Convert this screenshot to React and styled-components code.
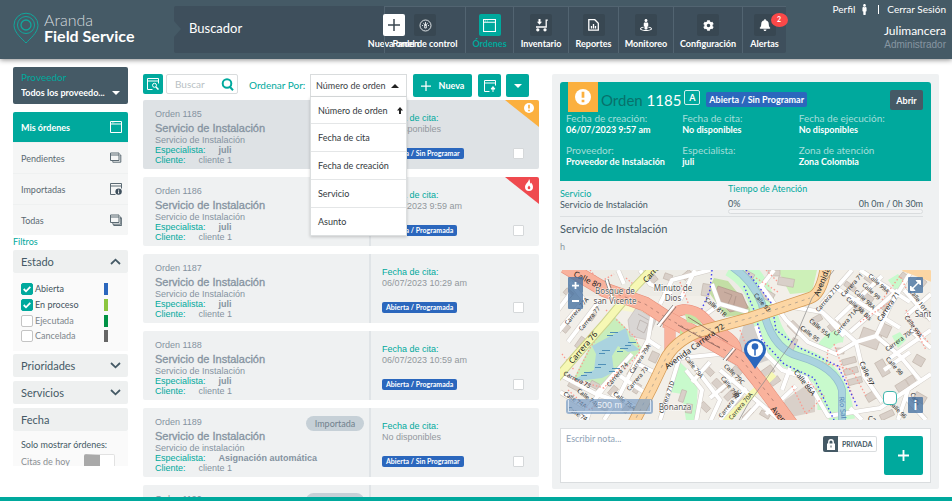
import React from 'react';
import styled, { createGlobalStyle, css } from 'styled-components';
import { FaCog, FaBell, FaMale, FaStreetView } from 'react-icons/fa';

const teal = '#00a99d';
const slate = '#455a66';
const navy = '#3e4f5c';
const blue = '#2b67bd';
const ui = "Lato, 'Open Sans', sans-serif";
const arial = "'Liberation Sans', Arial, sans-serif";

const GlobalStyle = createGlobalStyle`
  *, *::before, *::after { box-sizing: border-box; }
  body { margin: 0; background: #fff; font-family: ${ui}; font-size: 9px; color: ${slate}; overflow: hidden; }
  button, input, select, textarea { font-family: inherit; margin: 0; padding: 0; border: 0; border-radius: 0; }
  button { cursor: pointer; }
  h1, h2, h3, h4, p, ul, dl, dd { margin: 0; padding: 0; list-style: none; font-weight: 400; }
  a { color: inherit; text-decoration: none; }
  svg { display: block; }
`;

const Shell = styled.div`
  display: flex;
  flex-direction: column;
  height: 100vh;
  border-bottom: 4px solid ${teal};
`;

/* ---------- header ---------- */

const Header = styled.header`
  display: flex;
  flex: none;
  height: 59px;
  padding: 6px 6px 6px 13px;
  background: ${slate};
  box-shadow: 0 1px 5px rgba(0, 0, 0, 0.45);
  position: relative;
`;

const Brand = styled.div`
  display: flex;
  width: 161px;
  padding-top: 6px;
  gap: 5px;
  color: #fff;
`;

const BrandName = styled.h1`
  font-size: 16px;
  line-height: 16px;
  font-weight: 300;
  color: #d5dbde;
  strong { display: block; font-weight: 700; color: #fff; }
`;

const Banner = styled.div`
  display: flex;
  flex: 1;
  justify-content: space-between;
  min-width: 0;
  border-radius: 2px;
  background: ${navy};
`;

const Notch = styled.span`
  width: 0;
  margin: 15px 8px 0 0;
  border: 8px solid transparent;
  border-left: 7px solid ${slate};
  border-right: 0;
  height: 16px;
`;

const BannerTitle = styled.h2`
  flex: 1;
  font-size: 13px;
  line-height: 44px;
  color: #fff;
`;

const Nav = styled.nav`
  display: flex;
`;

const NavItem = styled.a`
  display: flex;
  flex-direction: column;
  align-items: center;
  flex: none;
  width: ${(p) => p.$width}px;
  padding-top: 7px;
  gap: 1px;
  font-size: 9px;
  line-height: 13px;
  font-weight: 700;
  white-space: nowrap;
  color: ${(p) => (p.$active ? teal : '#fff')};
  border: solid #526471;
  border-width: 1px 0 0 1px;
  ${(p) => p.$floating && css`
    border-color: transparent;
    margin-right: -35px;
  `}
`;

const NavIcon = styled.span`
  position: relative;
  display: grid;
  place-items: center;
  width: 22px;
  height: 22px;
  border-radius: 2px;
  background: ${(p) => p.$bg || '#384752'};
  color: ${(p) => p.$fg || '#fff'};
`;

const Count = styled.span`
  position: absolute;
  left: 17px;
  top: -1px;
  width: 17px;
  height: 14px;
  border-radius: 50%;
  background: #fb4848;
  color: #fff;
  font-size: 7px;
  line-height: 13px;
  text-align: center;
`;

const Account = styled.div`
  width: 160px;
  text-align: right;
  color: #fff;
`;

const AccountLinks = styled.div`
  display: flex;
  justify-content: flex-end;
  align-items: center;
  gap: 4px;
  margin-top: -4px;
  font-size: 10px;
  line-height: 14px;
`;

const Separator = styled.span`
  width: 1px;
  height: 9px;
  margin: 0 4px;
  background: #fff;
`;

const UserName = styled.p`
  margin-top: 8px;
  font-size: 12px;
  line-height: 14px;
`;

const UserRole = styled.p`
  font: 10px/13px ${arial};
  color: #8796a2;
`;

/* ---------- page columns ---------- */

const Main = styled.main`
  display: grid;
  grid-template-columns: 130px minmax(0, 409fr) minmax(0, 387fr);
  grid-template-rows: minmax(0, 1fr);
  flex: 1;
  min-height: 0;
  padding: 0 13px;
`;

const Sidebar = styled.aside`
  display: flex;
  flex-direction: column;
  margin: 8px 15px 31px 0;
  overflow: hidden;
`;

const ListColumn = styled.section`
  margin-right: 13px;
  padding-top: 15px;
  overflow: hidden;
`;

const Detail = styled.section`
  display: flex;
  flex-direction: column;
  margin: 15px 0 8px;
  padding: 8px;
  background: #eff1f2;
  border-radius: 2px;
`;

/* ---------- sidebar ---------- */

const Provider = styled.label`
  flex: none;
  position: relative;
  height: 37px;
  padding: 4px 8px;
  border-radius: 2px;
  background: ${slate};
  color: ${teal};
  font-size: 10px;
  line-height: 13px;
`;

const ProviderSelect = styled.select`
  appearance: none;
  display: block;
  width: 100%;
  height: 16px;
  background: transparent;
  color: #fff;
  font-size: 9px;
  font-weight: 700;
`;

const Caret = styled.span`
  width: 0;
  height: 0;
  border: 4px solid transparent;
  ${(p) => (p.$up
    ? css`border-bottom-color: ${p.$color}; border-top: 0;`
    : css`border-top-color: ${p.$color}; border-bottom: 0;`)}
`;

const CaretOver = styled(Caret)`
  position: absolute;
  right: ${(p) => p.$right}px;
  bottom: 9px;
  pointer-events: none;
`;

const Menu = styled.nav`
  display: grid;
  gap: 1px;
  flex: none;
  margin-top: 8px;
  border-radius: 2px;
  background: #eff1f1;
  overflow: hidden;
`;

const MenuItem = styled.a`
  display: flex;
  align-items: center;
  justify-content: space-between;
  height: 30px;
  padding: 0 6px 0 8px;
  background: ${(p) => (p.$active ? teal : '#f5f6f6')};
  color: ${(p) => (p.$active ? '#fff' : '#5b6a73')};
  font-weight: ${(p) => (p.$active ? 700 : 400)};
`;

const FilterTitle = styled.h3`
  flex: none;
  font-size: 9px;
  line-height: 13px;
  margin-bottom: 2px;
  color: ${teal};
`;

const FilterHead = styled.button`
  display: flex;
  flex: none;
  align-items: center;
  justify-content: space-between;
  width: 100%;
  height: 23px;
  margin-bottom: ${(p) => (p.$open ? 0 : 4)}px;
  padding: 0 7px 0 8px;
  border-radius: 2px;
  background: #eef0f0;
  font-size: 11px;
  color: ${slate};
`;

const FilterBody = styled.div`
  flex: none;
  padding: 8px;
  margin-bottom: 3px;
  background: #fafafa;
`;

const StateRow = styled.label`
  display: flex;
  align-items: center;
  height: 15px;
  margin-bottom: ${(p) => (p.$on ? 1 : 0)}px;
  gap: 2px;
  color: ${(p) => (p.$on ? '#44545e' : '#7d868c')};
`;

const Tick = styled.input`
  appearance: none;
  flex: none;
  width: 12px;
  height: 12px;
  border: 1px solid #c4c4c4;
  border-radius: 2px;
  background: #fff;
  &:checked {
    border-color: ${teal};
    background: ${teal};
  }
`;

const TickWrap = styled.span`
  position: relative;
  display: flex;
  svg { position: absolute; left: 2px; top: 2px; pointer-events: none; }
`;

const Swatch = styled.span`
  width: 4px;
  height: 12px;
  margin: 0 12px 0 auto;
  background: ${(p) => p.$color};
`;

const SwitchRow = styled.label`
  display: flex;
  justify-content: space-between;
  padding-right: 5px;
  margin-top: 4px;
  height: 18px;
  line-height: 16px;
  color: #8a8f93;
`;

const Switch = styled.input`
  appearance: none;
  width: 31px;
  height: 18px;
  border: 1px solid #e2e2e2;
  border-left: 16px solid #a9a9a9;
  border-radius: 2px;
  background: #fff;
`;

/* ---------- order list ---------- */

const Toolbar = styled.div`
  display: flex;
  align-items: flex-start;
  height: 23px;
  margin-bottom: 3px;
`;

const SolidButton = styled.button`
  display: flex;
  align-items: center;
  justify-content: center;
  flex: none;
  width: ${(p) => p.$width}px;
  height: ${(p) => p.$height || 23}px;
  margin-left: ${(p) => p.$left || 0}px;
  gap: 8px;
  border-radius: 2px;
  background: ${teal};
  color: #fff;
  font-size: 9px;
  font-weight: 700;
`;

const SearchBox = styled.div`
  display: flex;
  align-items: center;
  justify-content: space-between;
  width: 72px;
  height: 20px;
  margin-left: 3px;
  padding: 0 3px 0 8px;
  border: 1px solid #d9dcdd;
  border-radius: 2px;
  color: ${teal};
`;

const SearchInput = styled.input`
  width: 42px;
  background: transparent;
  font-size: 10px;
  outline: 0;
  &::placeholder { color: #b9bfc4; }
`;

const SortLabel = styled.label`
  margin: 0 2px 0 11px;
  width: 59px;
  font-size: 10px;
  line-height: 22px;
  white-space: nowrap;
  color: ${teal};
`;

const Sort = styled.div`
  position: relative;
  width: 97px;
`;

const SortSelect = styled.select`
  appearance: none;
  width: 100%;
  height: 23px;
  padding: 0 5px;
  border: 1px solid #d9dcdd;
  background: #fff;
  color: #3c4247;
  font-size: 9px;
`;

const SortMenu = styled.ul`
  position: absolute;
  z-index: 2;
  top: 23px;
  left: 0;
  width: 97px;
  background: #fff;
  border: solid #dcdfe0;
  border-width: 0 1px 1px;
  box-shadow: 0 1px 3px rgba(0, 0, 0, 0.2);
`;

const SortOption = styled.li`
  display: flex;
  align-items: center;
  justify-content: space-between;
  height: ${(p) => (p.$first ? 26 : 28)}px;
  padding: 0 3px 0 7px;
  color: #33393d;
  white-space: nowrap;
  & + & { border-top: 1px solid #e4e6e7; }
`;

const Cards = styled.ul`
  display: grid;
  gap: 8px;
`;

const Card = styled.li`
  position: relative;
  display: grid;
  grid-template-columns: minmax(0, 228fr) minmax(0, 168fr);
  height: 69px;
  border-radius: 2px;
  overflow: hidden;
  background: ${(p) => (p.$selected ? '#dee2e5' : '#eff1f2')};
  font-family: ${arial};
  color: #8593a1;
`;

const CardMain = styled.div`
  padding: 8px 5px 0 12px;
  border-right: 2px solid rgba(190, 198, 204, 0.3);
  line-height: 10px;
`;

const CardTop = styled.div`
  display: flex;
  justify-content: space-between;
  height: 14px;
  line-height: 12px;
`;

const Pill = styled.span`
  width: 58px;
  height: 15px;
  border-radius: 8px;
  background: #c6d0d7;
  color: #71818d;
  font: 9px/15px ${ui};
  text-align: center;
`;

const CardTitle = styled.h3`
  font-size: 11px;
  line-height: 13px;
  -webkit-text-stroke: 0.3px #8593a1;
`;

const Field = styled.p`
  span { color: ${teal}; margin-right: 13px; }
`;

const CardSide = styled.div`
  padding: 13px 15px 0 11px;
  line-height: 11px;
  color: #92989d;
  h4 { font-size: 9px; color: ${teal}; }
`;

const CardFoot = styled.div`
  display: flex;
  align-items: flex-start;
  justify-content: space-between;
  margin-top: 13px;
`;

const State = styled.span`
  padding: 0 4px;
  height: 11px;
  border-radius: 2px;
  background: ${blue};
  color: #fff;
  font: 700 7px/11px ${ui};
  white-space: nowrap;
`;

const Pick = styled(Tick)`
  width: 11px;
  height: 11px;
  border-color: #d5d8da;
  border-radius: 1px;
`;

const Corner = styled.svg`
  position: absolute;
  top: 0;
  right: 0;
`;

/* ---------- order detail ---------- */

const Hero = styled.div`
  flex: none;
  height: 99px;
  padding: 0 8px;
  border-radius: 3px 3px 0 0;
  background: ${teal};
  color: #fff;
`;

const HeroTop = styled.div`
  display: flex;
  align-items: flex-start;
  height: 30px;
`;

const Priority = styled.span`
  display: grid;
  place-items: center;
  width: 30px;
  height: 30px;
  background: #fbb03f;
`;

const HeroTitle = styled.h2`
  margin-left: 3px;
  font-size: 15px;
  line-height: 36px;
  color: #fff;
  span { color: #08716b; }
`;

const Grade = styled.span`
  width: 16px;
  height: 15px;
  margin: 8px 6px 0 3px;
  border: 1px solid #d2f0ee;
  border-radius: 2px;
  font-size: 9px;
  line-height: 13px;
  font-weight: 700;
  text-align: center;
`;

const BigState = styled(State)`
  height: 15px;
  margin-top: 10px;
  padding: 0 3px;
  font-size: 9px;
  line-height: 15px;
`;

const OpenButton = styled.button`
  width: 33px;
  height: 20px;
  margin: 8px 0 0 auto;
  border-radius: 2px;
  background: ${slate};
  color: #fff;
  font-size: 9px;
  font-weight: 700;
`;

const Facts = styled.dl`
  display: grid;
  grid-template-columns: repeat(3, 1fr);
  row-gap: 8px;
  margin: 0 8px 0 -2px;
  line-height: 12px;
  dt { font-size: 10px; color: #a3deda; }
  dd { font-weight: 700; }
`;

const Service = styled.div`
  display: flex;
  flex: none;
  justify-content: space-between;
  height: 36px;
  margin-right: 8px;
  border-bottom: 1px solid #dcdfe1;
  line-height: 11px;
  h3 { color: ${teal}; font-size: 9px; }
`;

const ServiceName = styled.div`
  padding-top: 7px;
`;

const Attention = styled.div`
  width: 195px;
  padding-top: 2px;
`;

const AttentionRow = styled.div`
  display: flex;
  justify-content: space-between;
  margin-top: 4px;
`;

const Progress = styled.div`
  height: 5px;
  border: 1px solid #d9dcde;
  border-radius: 3px;
  background: #f3f4f5;
`;

const Subject = styled.h3`
  flex: none;
  padding-top: 3px;
  font-size: 11px;
  line-height: 18px;
`;

const Description = styled.p`
  flex: none;
  height: 32px;
  padding-top: 2px;
  line-height: 14px;
  color: #8b979f;
`;

const MapFrame = styled.div`
  position: relative;
  flex: none;
  height: 150px;
  overflow: hidden;
  background: #f2efe9;
`;

const MapButton = styled.button`
  position: absolute;
  display: grid;
  place-items: center;
  width: 15px;
  height: 16px;
  border-radius: 1px;
  background: rgba(68, 111, 160, 0.78);
  color: #fff;
  font-size: 13px;
  line-height: 13px;
  font-weight: 700;
  ${(p) => p.$place}
`;

const ScaleBar = styled.div`
  position: absolute;
  left: 6px;
  bottom: 6px;
  width: 87px;
  height: 15px;
  padding: 1px 2px 2px;
  background: rgba(120, 155, 195, 0.7);
  border-radius: 3px;
  color: #eef3f8;
  text-align: center;
  font: 9px/11px ${arial};
  span { display: block; border: 1px solid #d9e4f0; border-top: 0; }
`;

const MapTick = styled(Tick)`
  position: absolute;
  right: 34px;
  bottom: 15px;
  width: 14px;
  height: 14px;
  border-color: #3fb6ad;
  border-radius: 4px;
`;

const NoteBox = styled.div`
  display: flex;
  flex: 1;
  align-items: flex-start;
  margin-top: 8px;
  padding: 7px;
  border: 1px solid #dadddf;
  background: #fff;
`;

const NoteInput = styled.textarea`
  flex: 1;
  min-width: 0;
  height: 39px;
  margin: -3px 0 0 -2px;
  resize: none;
  outline: 0;
  background: transparent;
  font-size: 9px;
  line-height: 12px;
  &::placeholder { color: #8fa2b5; }
`;

const PrivateToggle = styled.button`
  display: flex;
  align-items: center;
  width: 54px;
  height: 16px;
  gap: 4px;
  margin-right: 7px;
  border: 1px solid #dadddf;
  border-left: 0;
  border-radius: 2px;
  background: #fff;
  color: ${slate};
  font-size: 7px;
  font-weight: 700;
`;

const LockTile = styled.span`
  display: grid;
  place-items: center;
  width: 15px;
  height: 16px;
  border-radius: 2px 0 0 2px;
  background: ${slate};
`;

/* ---------- icons ---------- */

const WindowIcon = ({ size = 12, kind }) => (
  <svg width={size} height={size} viewBox="0 0 12 12" fill="none" stroke="currentColor" strokeWidth="1">
    {kind === 'stack' || kind === 'stack2' ? (
      <>
        <path d="M.5 1h8.500v7.500h-8.500zM.5 3h8.500" />
        <path d="M10 3h.8v7.200h-8v-1" />
        {kind === 'stack2' && <path d="M10 4.200h1.700v7.300h-8v-1.300" />}
      </>
    ) : (
      <path d={kind ? 'M5.500 11.500h-5v-11h11v5M.5 3h11' : 'M.5.5h11v11h-11zM.5 3h11'} />
    )}
    {!kind && <path d="M2 1.800h.6M3.600 1.800h.6" />}
    {kind === 'search' && (<><circle cx="7.500" cy="7.300" r="2" /><path d="M9 9l2.500 2.600" strokeWidth="1.500" /></>)}
    {kind === 'info' && (<><circle cx="8.600" cy="8.600" r="3.200" fill="#3e4f5c" stroke="none" /><path d="M8.600 6.700v1M8.600 8.300v2.200" stroke="#fff" /></>)}
    {kind === 'up' && <path d="M9 12V8.500M7 9l2-2.400L11 9z" fill="currentColor" />}
  </svg>
);

const Chevron = ({ up }) => (
  <svg width="11" height="7" viewBox="0 0 11 7" fill="none" stroke={slate} strokeWidth="1.800">
    <path d={up ? 'M1 6l4.500-4.300L10 6' : 'M1 1l4.500 4.300L10 1'} />
  </svg>
);

const Plus = ({ size, weight = 1.5 }) => (
  <svg width={size} height={size} viewBox="0 0 12 12" stroke="currentColor" strokeWidth={weight}>
    <path d="M6 0v12M0 6h12" />
  </svg>
);

const GaugeIcon = () => (
  <svg width="13" height="13" viewBox="0 0 13 13" fill="none" stroke="#dfe4e7">
    <circle cx="6.500" cy="6.500" r="5.500" />
    <path d="M6.500 3v4M5.700 5v4h1.600V5z" />
    <path d="M3 6.500h1M9 6.500h1M4 4l.7.600M9 4l-.7.600" />
  </svg>
);

const CartIcon = () => (
  <svg width="13" height="13" viewBox="0 0 13 13" fill="none" stroke="#fff" strokeWidth="1.300">
    <path d="M12.800 1.200h-1.600V8H1" />
    <path d="M4.500 0v3" strokeWidth="2" />
    <path d="M2 2.800h5L4.500 5.800z" fill="#fff" stroke="none" />
    <circle cx="2.800" cy="10.800" r="1" fill="#fff" />
    <circle cx="10" cy="10.800" r="1" fill="#fff" />
  </svg>
);

const ReportIcon = () => (
  <svg width="11" height="12" viewBox="0 0 11 12" fill="none" stroke="#fff" strokeWidth="1.300">
    <path d="M.8.7h6l3.500 3.500v7H.8z" />
    <path d="M3.500 9.500V7M5.500 9.500V5M7.500 9.500V7" />
  </svg>
);

const Alert = ({ r, x, y }) => (
  <g>
    <circle cx={x} cy={y} r={r} fill="#fff" />
    <path d={`M${x} ${y - r * 0.65}v${r * 0.75}M${x} ${y + r * 0.35}v${r * 0.3}`} stroke="#fbb03f" strokeWidth={r * 0.34} />
  </g>
);

const LogoPin = () => (
  <svg width="26" height="32" viewBox="0 0 26 32" fill="none" stroke="#12a79c">
    <path d="M13 31C10 27.500 1 21 1 13.200a12 12 0 0 1 24 0C25 21 16 27.500 13 31z" />
    <circle cx="13" cy="13" r="8.500" />
    <circle cx="13" cy="13" r="5" strokeWidth="1.300" />
  </svg>
);

/* ---------- map ---------- */

const streets = [
  'M-2 62L24 30L10 12', 'M8 72L40 30', 'M-2 40L10 24', 'M58 0L64 14', 'M92 46L88 70L70 104L58 128L44 150',
  'M88 70L100 78', 'M2 106L36 124L60 132', 'M36 124L72 84', 'M20 150L48 112', 'M60 106L84 122', 'M0 122L30 140L26 152', 'M52 124L82 140',
  'M74 92L98 104', 'M120 86L112 112L100 150', 'M126 100L142 120L136 152', 'M120 88L160 84L182 96', 'M134 96L160 130L150 152',
  'M160 100L196 130L222 152', 'M186 118L160 150', 'M200 132L182 152', 'M174 108L150 128', 'M150 92L132 112',
  'M120 30L135 0', 'M100 34L112 10L150 0', 'M138 50L160 34L188 42', 'M160 36L152 14', 'M200 14L226 50L248 72L276 84L296 72L262 42L226 36',
  'M196 56L206 84L222 100L246 108L268 146L320 138L371 104', 'M296 72L316 66L330 36L352 0', 'M296 72L304 106L322 132', 'M316 66L340 86L360 110', 'M330 88L371 60',
  'M276 18L340 58', 'M262 34L292 0', 'M276 50L322 6', 'M290 62L338 20', 'M300 0L350 32', 'M344 20L371 50', 'M346 46L371 24', 'M214 0L200 18', 'M262 42L284 66',
  'M350 60L371 78', 'M206 144L236 116', 'M338 150L348 120', 'M324 100L350 82', 'M230 98L222 120', 'M80 0L90 14L112 24', 'M302 150L290 138', 'M366 150L346 128',
];

const buildings = [
  [4, 20, 9, 6, 40], [14, 70, 12, 5, -55], [2, 54, 7, 8, 40], [28, 44, 8, 5, -55], [30, 112, 9, 6, 28], [48, 118, 10, 6, -50], [66, 98, 12, 5, -58],
  [72, 116, 10, 5, -58], [40, 136, 12, 5, 25], [8, 114, 12, 5, 28], [62, 136, 9, 5, -50], [120, 120, 5, 12, 18], [126, 134, 6, 9, 8], [144, 98, 10, 6, 45],
  [152, 112, 14, 7, 45], [164, 122, 12, 6, -45], [176, 130, 12, 7, -45], [140, 134, 10, 6, 45], [172, 98, 10, 6, 40], [122, 2, 10, 6, -40], [88, 6, 9, 7, -40],
  [104, 4, 8, 6, 20], [142, 14, 8, 12, 10], [184, 2, 10, 6, 30], [198, 20, 16, 9, 30], [218, 8, 16, 8, 10], [208, 0, 12, 6, 0], [228, 54, 14, 8, 45],
  [230, 68, 5, 15, 25], [252, 46, 10, 6, -30], [268, 52, 12, 7, -40], [284, 14, 12, 5, 35], [300, 24, 14, 5, 35], [304, 8, 14, 5, 35], [290, 34, 14, 5, 35],
  [322, 34, 9, 6, -50], [300, 60, 20, 17, 20], [318, 54, 12, 12, 25], [318, 90, 9, 16, -30], [276, 78, 8, 6, 0], [282, 88, 14, 6, -15], [284, 98, 14, 6, -15],
  [288, 108, 14, 6, -15], [354, 86, 10, 9, 30], [336, 112, 12, 8, -32], [348, 106, 8, 12, -32], [306, 122, 12, 8, -30], [320, 142, 14, 6, -25], [354, 124, 12, 8, 30],
  [200, 98, 14, 8, -35], [210, 108, 10, 6, -35], [356, 8, 10, 7, 40], [340, 4, 9, 6, 40], [362, 40, 8, 8, 20], [200, 142, 10, 5, 30], [182, 142, 12, 5, -45], [90, 82, 8, 10, 25],
];

const labels = [
  ['Calle 80', 14, 4, 27, 8], ['Carrera 76', 11, 93, -50, 8], ['Carrera 77', 20, 60, -50, 6], ['Carrera 77A', 6, 54, -50, 6], ['Carrera 79A', 71, 103, -57, 6], ['Carrera 74', 48, 116, -50, 6],
  ['Carrera 73', 68, 120, -50, 6], ['Carrera 75', 4, 103, 27, 6], ['Calle 74A', 4, 123, 32, 6], ['Calle 74B', 18, 120, 38, 6], ['Calle 75A', 54, 123, 38, 6], ['Calle 74', 8, 138, 32, 6],
  ['Avenida Carrera 72', 106, 98, -36, 8], ['Carrera 71D', 101, 143, -70, 6], ['Calle 79A', 126, 87, 52, 6], ['Calle 79B', 162, 107, 52, 6], ['Calle 79C', 165, 95, 45, 6],
  ['Carrera 70C', 160, 147, -52, 6], ['Carrera 70A', 170, 149, -50, 6], ['Calle 81B', 146, 29, 40, 6], ['Carrera', 85, 12, -48, 8], ['Calle 93', 195, 24, 50, 6], ['Avenida Carrera', 257, 26, -68, 8],
  ['Carrera 71D', 257, 41, -50, 6], ['Carrera 71', 282, 26, -48, 6], ['Calle 95A', 250, 50, 40, 6], ['Calle 95', 241, 57, 38, 6], ['Carrera 71A', 275, 65, -50, 6], ['Calle 98 Bis', 287, 28, 42, 6],
  ['Calle 98A', 295, 21, 42, 6], ['Calle 99', 303, 14, 42, 6], ['Calle 99A', 309, 5, 42, 6], ['Carrera 71', 319, 51, -56, 7], ['Carrera 70C', 326, 80, -36, 6], ['Calle 99A', 346, 46, 55, 6],
  ['Calle 101', 351, 20, 55, 6], ['Calle 98', 327, 88, 48, 6], ['Calle 97', 301, 92, 65, 7], ['Calle 86A', 235, 101, 52, 7], ['Calle 96', 330, 132, 45, 6], ['Avenida', 212, 138, 50, 8], ['Ca', 308, 148, 20, 7], ['Calle', 352, 123, 65, 6],
];

const MapDrawing = () => (
  <svg width="100%" height="150" viewBox="0 0 371 150" preserveAspectRatio="xMidYMid slice" fill="none" strokeLinejoin="round">
    <rect width="371" height="150" fill="#f2efe9" />
    <path d="M0 0h150v26H0zM150 0h60v40l-50-6z" fill="#edebe5" />
    <path d="M218 0h39l-5 22-22 2z" fill="#cdf0b8" />
    <path d="M52 44l14 14 16 20-12 14-14 10-10 14-32-8 14-28z" fill="#c8eebc" />
    <path d="M54 64l12-6 4 14 10 8-12 2-10-6-6 10 2 16-12 6-32 4 14-8 10-4 2-16-4-8z" fill="#aad3df" />
    <path d="M76 24l10 3 18 12-14 6-36-6z" fill="#f8f7cf" />
    <path d="M76 38l20 12-8 20-18-4-2-16z" fill="#d9d6d4" stroke="#c3b9b4" strokeWidth=".6" />
    <path d="M80 50l8 4-4 9-7-4zM78 44l14 8" stroke="#b5aaa6" strokeWidth=".7" />
    <path d="M118 90l20 20-2 40-10 0-4-26-12-2z" fill="#c8facc" />
    <path d="M154 8l14 3 26 32-28 4-18-26z" fill="#c3dfa5" />
    <path d="M158 16l24 8 6 14-18 4-16-16z" fill="#c9ada0" stroke="#a98f85" strokeWidth=".6" />
    <path d="M164 22l8 3-4 9M176 26l-3 12" stroke="#a98f85" strokeWidth=".7" />
    <path d="M184 54l22-3 6 38-18 6-18-16z" fill="#d3cfcc" />
    <path d="M328 10l10-6 8 10-8 10zM332 66l8-4 6 8-8 8z" fill="#c8facc" />
    <path d="M225 130l20-14 10 10 0 16-38 8z" fill="#d9d0c9" />
    <path d="M172 -6Q196 8 202 34Q210 78 238 90Q276 100 282 150" stroke="#c8facc" strokeWidth="26" />
    <path d="M244 90q20 10 20 50M262 80q10-16 22-14" stroke="#c8facc" strokeWidth="13" />
    {streets.map((d) => <path key={d} d={d} stroke="#d0cbc6" strokeWidth="5" />)}
    {buildings.map(([x, y, w, h, a]) => (
      <rect key={`${x}-${y}`} x={x} y={y} width={w} height={h} transform={`rotate(${a} ${x + w / 2} ${y + h / 2})`} fill="#d9d0c9" stroke="#bfb2a8" strokeWidth=".6" />
    ))}
    {streets.map((d) => <path key={d} d={d} stroke="#fff" strokeWidth="4" />)}
    <g stroke="#fa9b90" strokeWidth="1.300" strokeDasharray="1.500 2">
      <path d="M30 0l10 12 14-8M66 8l12 10M50 48l-20 30-16 32 30 8 18-22M46 40l30 28 4 14-16 18" />
      <path d="M274 74l20 56M268 80q-4 20 18 44M262 92l30 8 14 26M232 116l14 28 18-18-16-14M322 30l18-24 6 12M346 40l20 40M206 0l12 12M358 60l10 12M196 8l22 14" />
      <path d="M2 84l12 16M8 120l22 20 12-10M120 12l10 26M180 60l12 30M300 52l30-20" />
    </g>
    <path d="M168 -6Q192 8 202 34Q210 78 238 86Q276 97 282 120V152" stroke="#93bfcb" strokeWidth="8" />
    <path d="M168 -6Q192 8 202 34Q210 78 238 86Q276 97 282 120V152" stroke="#aad3df" strokeWidth="6.500" />
    <g stroke="#4343f0" strokeWidth="1.400" strokeDasharray="1.500 2.500">
      <path d="M152 0l-2 20-12 28M184 16l10 24 8 30 22 24 30 14 20 42" />
      <path d="M186 0l26 34 4 26 24 18 38 18 20 42" />
    </g>
    <path d="M-5 110L15 87L45 53L75 17L98 -7" stroke="#cdd38e" strokeWidth="9" />
    <path d="M-5 110L15 87L45 53L75 17L98 -7M160 158L190 126L214 104" stroke="#f6f8b4" strokeWidth="7" />
    <path d="M108 58C110 34 134 36 146 50S180 68 176 86M110 50V84" stroke="#e98a78" strokeWidth="11" />
    <path d="M108 58C110 34 134 36 146 50S180 68 176 86M110 50V84" stroke="#f9b29c" strokeWidth="10" />
    <path d="M5 -4L45 20L85 34L105 47L142 67L182 90L198 110L215 133L232 156" stroke="#e58b77" strokeWidth="15" />
    <path d="M5 -4L45 20L85 34L105 47L142 67L182 90L198 110L215 133L232 156" stroke="#f9b29c" strokeWidth="14" />
    <path d="M125 44q12 0 18 12l-16-4zM120 60l10 8-10 4z" fill="#c3e6a5" />
    <path d="M73 154L92 117L105 90Q114 72 138 62L190 48L250 28Q262 24 266 -4" stroke="#d49a55" strokeWidth="12" />
    <path d="M73 154L92 117L105 90Q114 72 138 62L190 48L250 28Q262 24 266 -4M344 -4L376 8" stroke="#fcd6a4" strokeWidth="10.500" />
    <path d="M73 154L92 117L105 90Q114 72 138 62L190 48L250 28" stroke="#a89b8a" strokeWidth=".8" strokeDasharray="3 4" />
    <path d="M45 20L85 34L105 47L142 67L182 90L215 133" stroke="#a9766c" strokeWidth=".8" strokeDasharray="3 4" />
    <path d="M128 47L168 72M118 55L160 78" stroke="#7f5c55" strokeWidth=".8" />
    <path d="M274 0L252 28L235 68L218 92L204 112L188 134L178 152" stroke="#888" strokeWidth=".7" />
    <g stroke="#fff" strokeWidth="2.500">
      <path d="M46 10l6 18M98 56l16-20M164 90l10-12" />
      <g stroke="#666" strokeWidth=".7"><path d="M45 10l6 18M48 9l6 18M97 55l16-20M100 57l16-20M163 90l10-12M166 91l10-12" /></g>
    </g>
    <g fill="#4f90b8">
      {[[50, 62], [42, 80], [60, 78], [38, 94], [52, 98], [68, 72], [24, 102]].map(([x, y]) => <path key={x} d={`M${x} ${y}h8v1h-8zM${x - 3} ${y + 3}h6v1h-6z`} />)}
    </g>
    <g fill="#222" fontFamily="Noto Sans, sans-serif">
      {labels.map(([t, x, y, a, s], i) => <text key={i} x={x} y={y + 2} fontSize={s} transform={`rotate(${a} ${x} ${y})`}>{t}</text>)}
      <g fill="#555" fontSize="8" textAnchor="middle" stroke="#fff" strokeWidth="1" paintOrder="stroke">
        <text x="55" y="24">Bosque de</text>
        <text x="55" y="34">san Vicente</text>
        <text x="113" y="21">Minuto de</text>
        <text x="113" y="31">Dios</text>
        <text x="115" y="140">Bonanza</text>
        <text x="363" y="47">Sant</text>
      </g>
      <text x="279" y="127" fontSize="7" fill="#4d80b3" transform="rotate(84 279 127)">Río Sal</text>
    </g>
    <path d="M195 99Q190 91 186 86A11 11 0 1 1 204 86Q200 91 195 99z" fill={blue} />
    <circle cx="195" cy="79" r="8" fill="#fff" />
    <circle cx="195" cy="76.500" r="3.300" fill={blue} />
    <path d="M195 78v7.500" stroke={blue} strokeWidth="1.500" />
  </svg>
);

/* ---------- data ---------- */

const navItems = [
  { label: 'Nueva orden', width: 52, icon: <Plus size={12} />, bg: '#fff', fg: '#3b4750', floating: true },
  { label: 'Panel de control', width: 81, icon: <GaugeIcon /> },
  { label: 'Órdenes', width: 48, icon: <WindowIcon size={13} />, bg: teal, active: true },
  { label: 'Inventario', width: 55, icon: <CartIcon /> },
  { label: 'Reportes', width: 50, icon: <ReportIcon /> },
  { label: 'Monitoreo', width: 55, icon: <FaStreetView size={12} /> },
  { label: 'Configuración', width: 69, icon: <FaCog size={11} /> },
  { label: 'Alertas', width: 44, icon: <FaBell size={12} />, count: 2 },
];

const menu = [['Mis órdenes', undefined], ['Pendientes', 'stack'], ['Importadas', 'info'], ['Todas', 'stack2']];

const states = [
  ['Abierta', '#2b67bd', true], ['En proceso', '#8cc63f', true], ['Ejecutada', '#009245', false], ['Cancelada', '#666', false],
];

const orders = [
  { id: 1185, sub: 'Servicio de Instalación', by: 'juli', date: 'No disponibles', state: 'Abierta / Sin Programar', flag: 'warn' },
  { id: 1186, sub: 'Servicio de Instalación', by: 'juli', date: '06/07/2023 9:59 am', state: 'Abierta / Programada', flag: 'fire' },
  { id: 1187, sub: 'Servicio de Instalación', by: 'juli', date: '06/07/2023 10:29 am', state: 'Abierta / Programada' },
  { id: 1188, sub: 'Servicio de Instalación', by: 'juli', date: '06/07/2023 10:59 am', state: 'Abierta / Programada' },
  { id: 1189, sub: 'Servicio de instalación', by: 'Asignación automática', date: 'No disponibles', state: 'Abierta / Sin Programar', imported: true },
  { id: 1190, sub: 'Servicio de instalación', by: 'Asignación automática', date: 'No disponibles', state: 'Abierta / Sin Programar', imported: true },
];

const facts = [
  ['Fecha de creación:', '06/07/2023 9:57 am'], ['Fecha de cita:', 'No disponibles'], ['Fecha de ejecución:', 'No disponibles'],
  ['Proveedor:', 'Proveedor de Instalación'], ['Especialista:', 'juli'], ['Zona de atención', 'Zona Colombia'],
];

const sortOptions = ['Número de orden', 'Fecha de cita', 'Fecha de creación', 'Servicio', 'Asunto'];

const OrderCard = ({ order, selected }) => (
  <Card $selected={selected}>
    <CardMain>
      <CardTop>Orden {order.id}{order.imported && <Pill>Importada</Pill>}</CardTop>
      <CardTitle>Servicio de Instalación</CardTitle>
      <p>{order.sub}</p>
      <Field><span>Especialista:</span><b>{order.by}</b></Field>
      <Field><span>Cliente:</span>cliente 1</Field>
    </CardMain>
    <CardSide>
      <h4>Fecha de cita:</h4>
      {order.date}
      <CardFoot>
        <State>{order.state}</State>
        <Pick type="checkbox" aria-label={`Seleccionar orden ${order.id}`} />
      </CardFoot>
    </CardSide>
    {order.flag && (
      <Corner width="34" height="27" viewBox="0 0 34 27">
        <path d="M0 0h34v27z" fill={order.flag === 'warn' ? '#fbb03f' : '#ef4a4f'} />
        {order.flag === 'warn' ? <Alert x={24} y={8} r={5} /> : (
          <path fillRule="evenodd" fill="#fff" d="M24 2c0 3-4 4.500-4 8a4 4 0 0 0 8 0c0-2-1-3-2-4.500-.5 1-.8 1-1 1C25 5 25 3 24 2zM24 8.500c1 1 1.300 1.600 1.300 2.500a1.300 1.300 0 0 1-2.600 0c0-.9.600-1.500 1.300-2.500z" />
        )}
      </Corner>
    )}
  </Card>
);

export default function App() {
  return (
    <Shell>
      <GlobalStyle />
      <Header>
        <Brand>
          <LogoPin />
          <BrandName>Aranda<strong>Field Service</strong></BrandName>
        </Brand>
        <Banner>
          <Notch />
          <BannerTitle>Buscador</BannerTitle>
          <Nav>
            {navItems.map((n) => (
              <NavItem key={n.label} href="#" $width={n.width} $active={n.active} $floating={n.floating}>
                <NavIcon $bg={n.bg} $fg={n.fg}>{n.icon}{n.count && <Count>{n.count}</Count>}</NavIcon>
                {n.label}
              </NavItem>
            ))}
          </Nav>
        </Banner>
        <Account>
          <AccountLinks>
            <a href="#">Perfil</a>
            <FaMale size={11} />
            <Separator />
            <a href="#">Cerrar Sesión</a>
          </AccountLinks>
          <UserName>Julimancera</UserName>
          <UserRole>Administrador</UserRole>
        </Account>
      </Header>

      <Main>
        <Sidebar>
          <Provider>
            Proveedor
            <ProviderSelect><option>Todos los proveedo...</option></ProviderSelect>
            <CaretOver $color="#fff" $right={8} />
          </Provider>
          <Menu>
            {menu.map(([label, kind]) => (
              <MenuItem key={label} href="#" $active={!kind}>{label}<WindowIcon kind={kind} /></MenuItem>
            ))}
          </Menu>
          <FilterTitle>Filtros</FilterTitle>
          <FilterHead $open>Estado<Chevron up /></FilterHead>
          <FilterBody>
            {states.map(([label, color, on]) => (
              <StateRow key={label} $on={on}>
                <TickWrap>
                  <Tick type="checkbox" defaultChecked={on} />
                  {on && <svg width="8" height="8" viewBox="0 0 8 8" fill="none" stroke="#fff" strokeWidth="1.800"><path d="M.7 4l2.300 2.300L7.300 1.800" /></svg>}
                </TickWrap>
                {label}
                <Swatch $color={color} />
              </StateRow>
            ))}
          </FilterBody>
          <FilterHead>Prioridades<Chevron /></FilterHead>
          <FilterHead>Servicios<Chevron /></FilterHead>
          <FilterHead $open>Fecha</FilterHead>
          <FilterBody>
            <p>Solo mostrar órdenes:</p>
            <SwitchRow>Citas de hoy<Switch type="checkbox" role="switch" /></SwitchRow>
          </FilterBody>
        </Sidebar>

        <ListColumn>
          <Toolbar>
            <SolidButton $width={20} $height={20} aria-label="Búsqueda avanzada"><WindowIcon kind="search" /></SolidButton>
            <SearchBox>
              <SearchInput placeholder="Buscar" aria-label="Buscar" />
              <svg width="13" height="13" viewBox="0 0 13 13" fill="none" stroke="currentColor" strokeWidth="2"><circle cx="6" cy="5.500" r="4.300" /><path d="M9 9l3 3.200" /></svg>
            </SearchBox>
            <SortLabel htmlFor="sort">Ordenar Por:</SortLabel>
            <Sort>
              <SortSelect id="sort">{sortOptions.map((o) => <option key={o}>{o}</option>)}</SortSelect>
              <CaretOver $up $color="#222" $right={8} />
              <SortMenu role="listbox" aria-label="Ordenar por">
                {sortOptions.map((o, i) => (
                  <SortOption key={o} role="option" aria-selected={i === 0} $first={i === 0}>
                    {o}
                    {i === 0 && <svg width="6" height="7" viewBox="0 0 6 7"><path d="M3 0l3 3.500H4V7H2V3.500H0z" fill="#222" /></svg>}
                  </SortOption>
                ))}
              </SortMenu>
            </Sort>
            <SolidButton $width={59} $left={6}><Plus size={10} />Nueva</SolidButton>
            <SolidButton $width={23} $left={6} aria-label="Importar"><WindowIcon kind="up" /></SolidButton>
            <SolidButton $width={23} $left={5} aria-label="Más acciones"><Caret $color="#fff" /></SolidButton>
          </Toolbar>
          <Cards>
            {orders.map((o, i) => <OrderCard key={o.id} order={o} selected={i === 0} />)}
          </Cards>
        </ListColumn>

        <Detail>
          <Hero>
            <HeroTop>
              <Priority><svg width="16" height="16"><Alert x={8} y={8} r={8} /></svg></Priority>
              <HeroTitle><span>Orden</span> 1185</HeroTitle>
              <Grade>A</Grade>
              <BigState>Abierta / Sin Programar</BigState>
              <OpenButton>Abrir</OpenButton>
            </HeroTop>
            <Facts>
              {facts.map(([k, v]) => <div key={k}><dt>{k}</dt><dd>{v}</dd></div>)}
            </Facts>
          </Hero>
          <Service>
            <ServiceName><h3>Servicio</h3>Servicio de Instalación</ServiceName>
            <Attention>
              <h3>Tiempo de Atención</h3>
              <AttentionRow><span>0%</span><span>0h 0m / 0h 30m</span></AttentionRow>
              <Progress role="progressbar" aria-valuenow={0} aria-label="Tiempo de Atención" />
            </Attention>
          </Service>
          <Subject>Servicio de Instalación</Subject>
          <Description>h</Description>
          <MapFrame>
            <MapDrawing />
            <MapButton $place="left: 8px; top: 7px;" aria-label="Acercar"><Plus size={7} weight={3} /></MapButton>
            <MapButton $place="left: 8px; top: 23px;" aria-label="Alejar"><svg width="7" height="2"><path d="M0 1h7" stroke="#fff" strokeWidth="2" /></svg></MapButton>
            <MapButton $place="right: 8px; top: 7px;" aria-label="Pantalla completa">
              <svg width="11" height="11" viewBox="0 0 11 11" fill="#fff" stroke="#fff"><path d="M6 .5h4.500V5zM.5 6v4.500H5z" /><path d="M2 9l7-7" strokeWidth="1.500" /></svg>
            </MapButton>
            <MapButton $place="right: 8px; bottom: 7px;">i</MapButton>
            <ScaleBar><span>500 m</span></ScaleBar>
            <MapTick type="checkbox" aria-label="Capa del mapa" />
          </MapFrame>
          <NoteBox>
            <NoteInput placeholder="Escribir nota..." aria-label="Escribir nota" />
            <PrivateToggle>
              <LockTile>
                <svg width="8" height="11" viewBox="0 0 8 11"><path d="M1.800 5V3a2.200 2.200 0 0 1 4.400 0v2" fill="none" stroke="#fff" strokeWidth="1.400" /><path d="M0 4.500h8V11H0z" fill="#fff" /><path d="M4 6.500v2" stroke={slate} /></svg>
              </LockTile>
              PRIVADA
            </PrivateToggle>
            <SolidButton $width={39} $height={39} aria-label="Agregar nota"><Plus size={11} weight={2} /></SolidButton>
          </NoteBox>
        </Detail>
      </Main>
    </Shell>
  );
}
